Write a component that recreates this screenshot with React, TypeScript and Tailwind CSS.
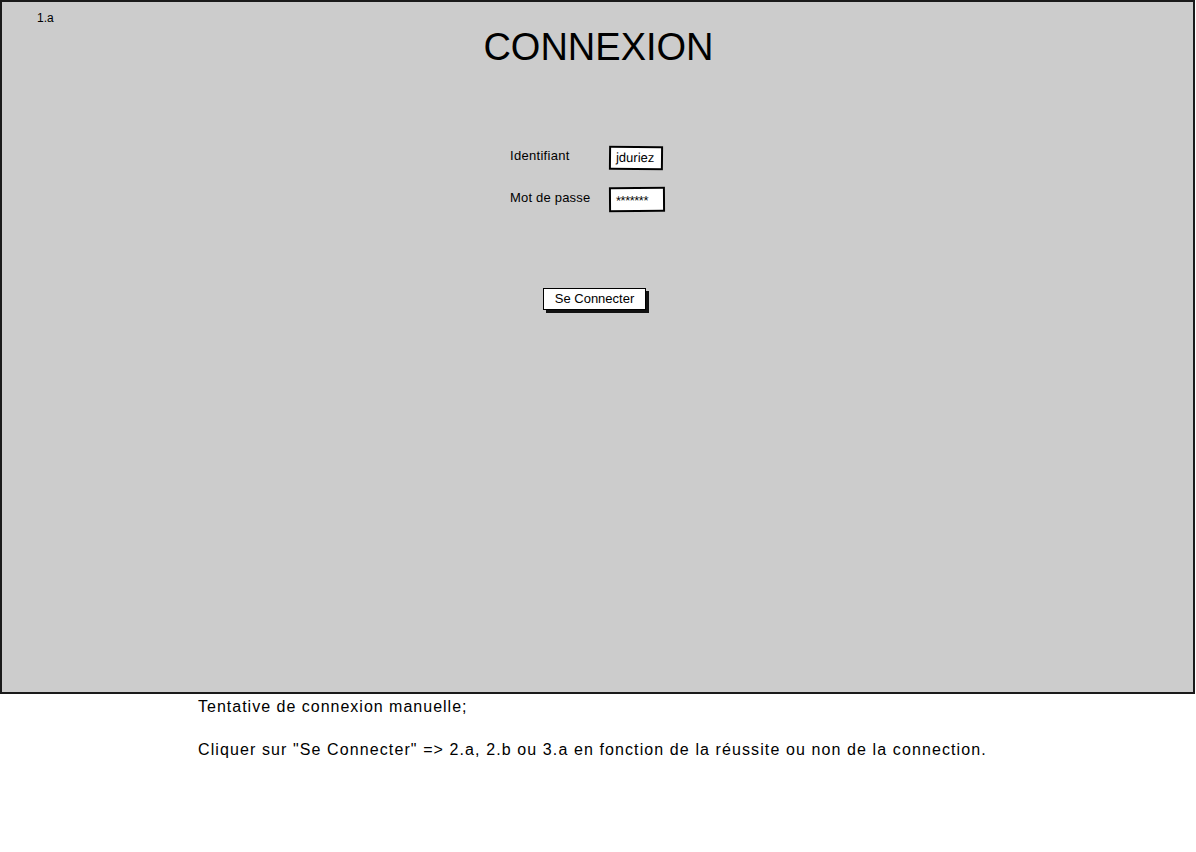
import React from "react";

const font = { fontFamily: "'Liberation Sans', Arial, sans-serif" };

export default function App() {
  return (
    <div className="w-[1196px] h-[852px] bg-white text-black" style={font}>
      <div className="w-[1195px] h-[694px] bg-[#cccccc] border-2 border-[#1a1a1a] relative flex flex-col">
        <div className="absolute left-[35px] top-[7px] text-[12px]">1.a</div>

        <h1 className="mt-[26px] text-center text-[38px] leading-[38px] pl-[2px]">CONNEXION</h1>

        <div className="mt-[80px] ml-[508px] flex flex-col gap-[17px]">
          <div className="flex items-center">
            <span className="w-[99px] text-[13px] tracking-[0.3px] -mt-[4px]">Identifiant</span>
            <div className="h-[24px] w-[54px] px-[5px] flex items-center bg-white border-2 border-black text-[13px] rotate-[0.6deg]">
              jduriez
            </div>
          </div>
          <div className="flex items-center">
            <span className="w-[99px] text-[13px] tracking-[0.2px] -mt-[4px]">Mot de passe</span>
            <div className="h-[25px] w-[56px] px-[5px] flex items-start pt-[2px] bg-white border-2 border-black text-[13px] tracking-[-0.5px] -rotate-[0.4deg]">
              *******
            </div>
          </div>
        </div>

        <div className="mt-[74px] ml-[541px]">
          <button className="h-[22px] w-[103px] bg-white border border-black shadow-[3px_3px_0_#111] text-[13px] leading-none">
            Se Connecter
          </button>
        </div>
      </div>

      <div className="ml-[198px] mt-[3px] text-[16px] leading-[20px] tracking-[1px]">
        <p>Tentative de connexion manuelle;</p>
        <p className="mt-[23px] tracking-[1.1px]">
          Cliquer sur "Se Connecter" =&gt; 2.a, 2.b ou 3.a en fonction de la réussite ou non de la connection.
        </p>
      </div>
    </div>
  );
}
